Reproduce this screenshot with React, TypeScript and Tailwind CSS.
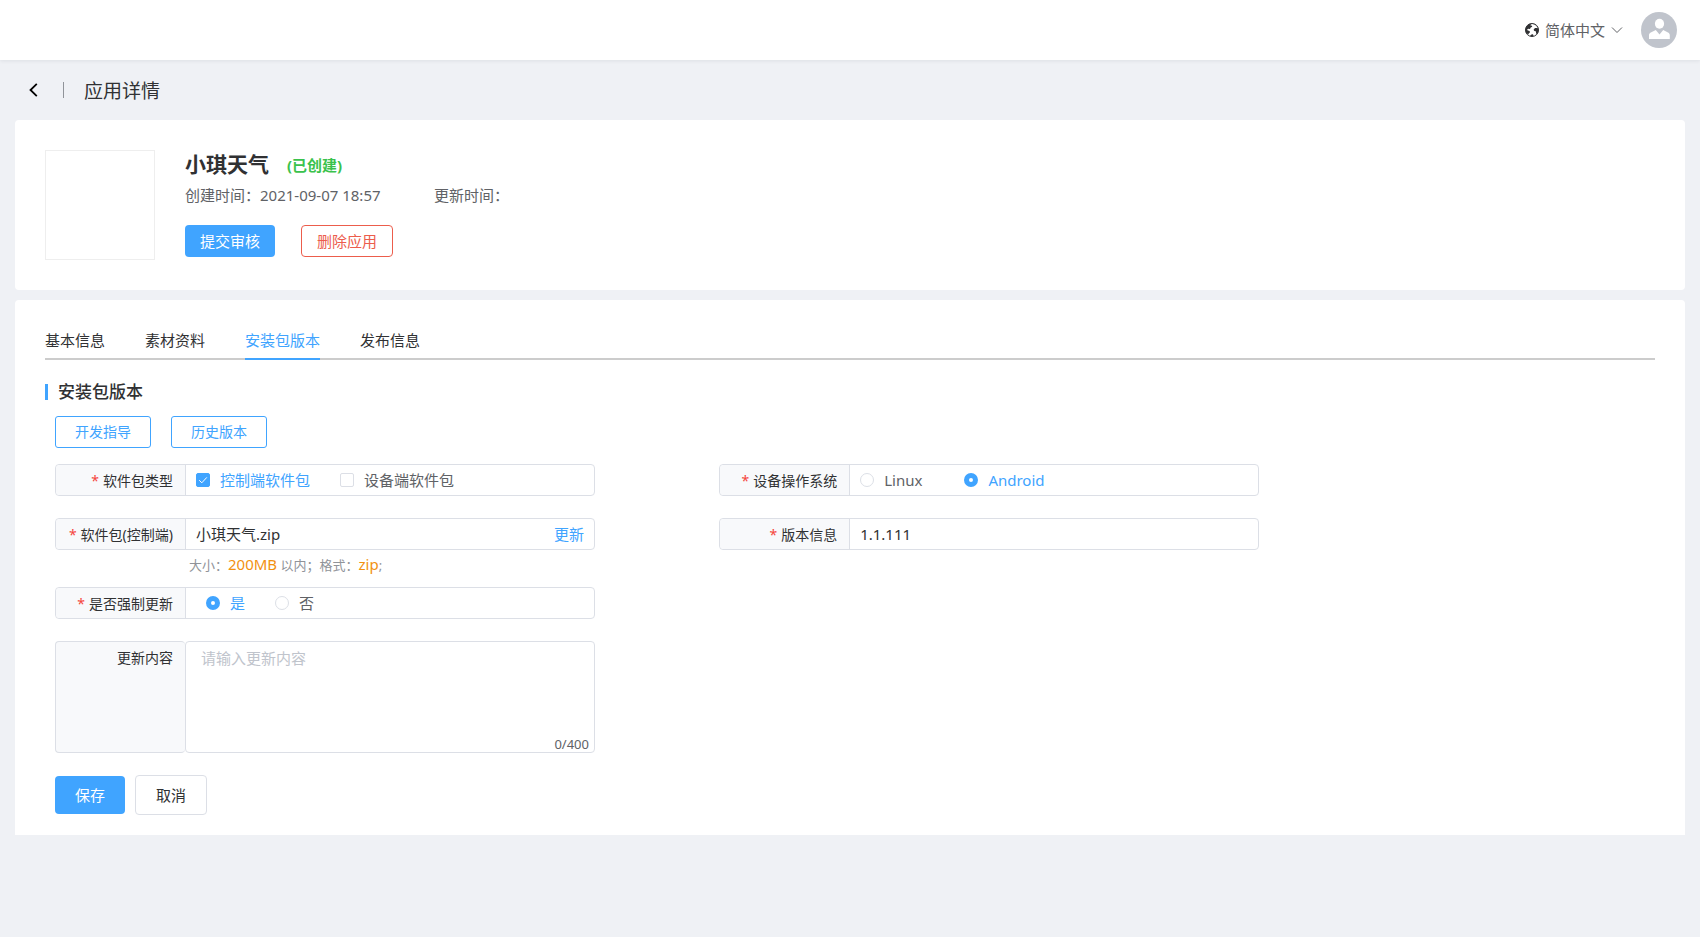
import React, { useState } from 'react';
import { clsx } from 'clsx';

const TABS = ['基本信息', '素材资料', '安装包版本', '发布信息'];

const GlobeIcon = () => (
  <svg viewBox="0 0 14 14" className="size-3.5 text-[#303133]" aria-hidden="true">
    <circle cx="7" cy="7" r="6.5" fill="none" stroke="currentColor" />
    <path
      d="M7 .5C3.4.5.5 3.4.5 7c0 1 .2 2 .7 2.9l1.9 1.4c.6-.6.8-1.3 1.6-1.6.5-.5.2-1.2-.4-1.6L2.4 7.2c-.4-.7.1-1.4.9-1.5l1.6.3c.7-.3.3-1 .9-1.4l1.3-.8c.4-.6-.2-1.1-.8-1.2L5.2 2.3C5.500 1.600 6.400 1.300 7 .5z"
      fill="currentColor"
    />
    <path
      d="M8.600 1.300 11.300 2.400 13 5.200l-1.300-.3-1.500.2-1.200 1c-.5.700-.3 1.500.4 1.900l1.300.3c.5.500.2 1.300.5 1.900l.500 1.300c.9-.8 1.500-2 1.700-3.300L13.500 7c0-2.700-1.900-5.300-4.900-6.200z"
      fill="currentColor"
    />
    <path d="M5.200 12.900c.4-.9 1.200-1.600 2-1.700.8 0 1.300.7 1.300 1.300l-1 .9z" fill="currentColor" />
  </svg>
);

const ChevronDown = () => (
  <svg viewBox="0 0 12 12" className="size-3 text-[#606266]" fill="none" stroke="currentColor" aria-hidden="true">
    <path d="M1 3.5 6 8.5 11 3.5" />
  </svg>
);

const Avatar = () => (
  <svg viewBox="0 0 36 36" className="size-9" aria-hidden="true">
    <circle cx="18" cy="18" r="18" fill="#c0c4cc" />
    <ellipse cx="18.5" cy="11.7" rx="4.6" ry="5" fill="#fff" />
    <path d="M8 27v-3.5c0-1.6.8-2.6 2.3-3.2l4.5-2.4 3.7 4.6 3.7-4.6 4.3 2.4c1.5.6 2.3 1.6 2.3 3.2V27z" fill="#fff" />
  </svg>
);

interface FieldProps {
  label: string;
  required?: boolean;
  htmlFor?: string;
  children: React.ReactNode;
}

const Field: React.FC<FieldProps> = ({ label, required = true, htmlFor, children }) => {
  const Label = htmlFor ? 'label' : 'span';
  return (
    <div className="flex h-8 w-full max-w-[540px] rounded border border-[#dcdfe6]">
      <Label
        htmlFor={htmlFor}
        className="w-[130px] shrink-0 rounded-l border-r border-[#dcdfe6] bg-[#f8f9fb] pr-3 text-right text-sm leading-8 text-[#303133]"
      >
        {required && <span className="mr-1 text-[#f5453d]">*</span>}
        {label}
      </Label>
      <div className="flex min-w-0 flex-1 items-center">{children}</div>
    </div>
  );
};

interface ChoiceProps {
  label: string;
  name: string;
  checked: boolean;
  onChange: () => void;
}

const Checkbox: React.FC<ChoiceProps> = ({ label, name, checked, onChange }) => (
  <label className={clsx('flex items-center gap-2.5', checked ? 'text-[#40a4ff]' : 'text-[#606266]')}>
    <span className="grid size-3.5 place-items-center">
      <input
        type="checkbox"
        name={name}
        checked={checked}
        onChange={onChange}
        className="col-start-1 row-start-1 size-3.5 appearance-none rounded-xs border border-[#dcdfe6] bg-white checked:border-[#40a4ff] checked:bg-[#40a4ff]"
      />
      {checked && (
        <svg viewBox="0 0 14 14" className="pointer-events-none col-start-1 row-start-1 size-3.5" fill="none" stroke="#fff">
          <path d="M3.2 7.2 5.8 9.8 10.8 4.4" />
        </svg>
      )}
    </span>
    {label}
  </label>
);

const Radio: React.FC<ChoiceProps> = ({ label, name, checked, onChange }) => (
  <label className={clsx('flex items-center gap-2.5', checked ? 'text-[#40a4ff]' : 'text-[#606266]')}>
    <input
      type="radio"
      name={name}
      checked={checked}
      onChange={onChange}
      className="size-3.5 appearance-none rounded-full border border-[#dcdfe6] bg-white checked:border-5 checked:border-[#40a4ff]"
    />
    {label}
  </label>
);

export default function App() {
  const [tab, setTab] = useState('安装包版本');
  const [control, setControl] = useState(true);
  const [device, setDevice] = useState(false);
  const [os, setOs] = useState('Android');
  const [force, setForce] = useState(true);
  const [version, setVersion] = useState('1.1.111');
  const [content, setContent] = useState('');

  return (
    <div className="min-h-screen bg-[#eff1f5] font-['Noto_Sans','Noto_Sans_CJK_SC',sans-serif] text-[15px] leading-5 text-[#303133]">
      <header className="relative flex h-[60px] items-center justify-end bg-white pr-[23px] shadow-[0_1px_4px_rgba(0,21,41,0.08)]">
        <button className="flex items-center gap-1.5 text-[#606266]">
          <GlobeIcon />
          简体中文
          <ChevronDown />
        </button>
        <button className="ml-[18px]" aria-label="avatar">
          <Avatar />
        </button>
      </header>

      <div className="flex h-[60px] items-center pl-[26px]">
        <button aria-label="back">
          <svg viewBox="0 0 16 16" className="size-4" fill="none" stroke="#000" strokeWidth="1.8">
            <path d="M10.8 1.8 4.500 8l6.300 6.200" />
          </svg>
        </button>
        <span className="ml-[21px] h-4 w-px bg-[#909399]" />
        <h1 className="ml-5 pt-0.5 text-[19px] leading-7">应用详情</h1>
      </div>

      <main className="flex flex-col gap-2.5 px-[15px]">
        <section className="flex h-[170px] rounded bg-white px-[30px] pt-[30px]">
          <div className="size-[110px] shrink-0 border border-[#eee]" />
          <div className="ml-[30px]">
            <div className="flex h-7 items-center">
              <h2 className="text-[21px] leading-7 font-bold">小琪天气</h2>
              <span className="ml-[18px] pt-0.5 font-bold text-[#3ac24c]">(已创建)</span>
            </div>
            <div className="mt-[7px] flex gap-10 text-[#606266]">
              <span className="min-w-[209px]">创建时间：2021-09-07 18:57</span>
              <span>更新时间：</span>
            </div>
            <div className="mt-5 flex gap-[26px]">
              <button className="h-8 w-[90px] rounded bg-[#40a4ff] text-white">提交审核</button>
              <button className="h-8 w-[92px] rounded border border-[#ec5d4c] text-[#ec5d4c]">删除应用</button>
            </div>
          </div>
        </section>

        <section className="rounded-t bg-white px-[30px] pt-[22px] pb-5">
          <nav className="flex gap-10 border-b-2 border-[#ccc]">
            {TABS.map((item) => (
              <button
                key={item}
                onClick={() => setTab(item)}
                className={clsx(
                  '-mb-0.5 h-[38px] border-b-2',
                  tab === item ? 'border-[#40a4ff] text-[#40a4ff]' : 'border-transparent'
                )}
              >
                {item}
              </button>
            ))}
          </nav>

          <h3 className="mt-5 flex items-center gap-2.5 text-[17px] leading-6 font-medium">
            <span className="h-4 w-[3px] bg-[#40a4ff]" />
            安装包版本
          </h3>

          <form className="mr-1.5 ml-2.5" onSubmit={(e) => e.preventDefault()}>
            <div className="mt-3 flex gap-5 text-sm text-[#40a4ff]">
              <button type="button" className="h-8 w-24 rounded-[3px] border border-[#40a4ff]">开发指导</button>
              <button type="button" className="h-8 w-24 rounded-[3px] border border-[#40a4ff]">历史版本</button>
            </div>

            <div className="mt-4 flex">
              <div className="flex w-5/12 flex-col gap-[22px]">
                <Field label="软件包类型">
                  <div className="flex gap-[30px] pl-2.5">
                    <Checkbox name="control" label="控制端软件包" checked={control} onChange={() => setControl(!control)} />
                    <Checkbox name="device" label="设备端软件包" checked={device} onChange={() => setDevice(!device)} />
                  </div>
                </Field>

                <div>
                  <Field label="软件包(控制端)">
                    <span className="flex-1 pl-2.5">小琪天气.zip</span>
                    <button type="button" className="pr-2.5 text-[#40a4ff]">更新</button>
                  </Field>
                  <p className="mt-1 -mb-2.5 pl-[134px] text-[13px] text-[#909399]">
                    大小：<span className="text-[15px] text-[#f29111]">200MB</span> 以内；格式：
                    <span className="text-[15px] text-[#f29111]">zip</span>;
                  </p>
                </div>

                <Field label="是否强制更新">
                  <div className="flex gap-[30px] pl-5">
                    <Radio name="force" label="是" checked={force} onChange={() => setForce(true)} />
                    <Radio name="force" label="否" checked={!force} onChange={() => setForce(false)} />
                  </div>
                </Field>

                <div className="flex h-28 w-full max-w-[540px]">
                  <label
                    htmlFor="content"
                    className="w-[130px] shrink-0 rounded border border-r-0 border-[#dcdfe6] bg-[#f8f9fb] pr-3 text-right text-sm leading-8"
                  >
                    更新内容
                  </label>
                  <div className="relative flex-1">
                    <textarea
                      id="content"
                      maxLength={400}
                      value={content}
                      onChange={(e) => setContent(e.target.value)}
                      placeholder="请输入更新内容"
                      className="block size-full resize-none rounded border border-[#dcdfe6] px-[15px] py-1.5 outline-none placeholder:text-[#c0c4cc]"
                    />
                    <span className="absolute right-1.5 bottom-[3px] text-[13px] leading-3 text-[#606266]">
                      {content.length}/400
                    </span>
                  </div>
                </div>
              </div>

              <div className="flex w-5/12 flex-col gap-[22px]">
                <Field label="设备操作系统">
                  <div className="flex gap-[42px] pl-2.5">
                    <Radio name="os" label="Linux" checked={os === 'Linux'} onChange={() => setOs('Linux')} />
                    <Radio name="os" label="Android" checked={os === 'Android'} onChange={() => setOs('Android')} />
                  </div>
                </Field>
                <Field label="版本信息" htmlFor="version">
                  <input
                    id="version"
                    type="text"
                    value={version}
                    onChange={(e) => setVersion(e.target.value)}
                    className="h-full w-full px-2.5 outline-none"
                  />
                </Field>
              </div>
            </div>

            <div className="mt-[22px] flex items-center gap-2.5">
              <button type="submit" className="h-[38px] w-[70px] rounded bg-[#40a4ff] text-white">保存</button>
              <button type="button" className="h-10 w-[72px] rounded border border-[#dcdfe6]">取消</button>
            </div>
          </form>
        </section>
      </main>
    </div>
  );
}
